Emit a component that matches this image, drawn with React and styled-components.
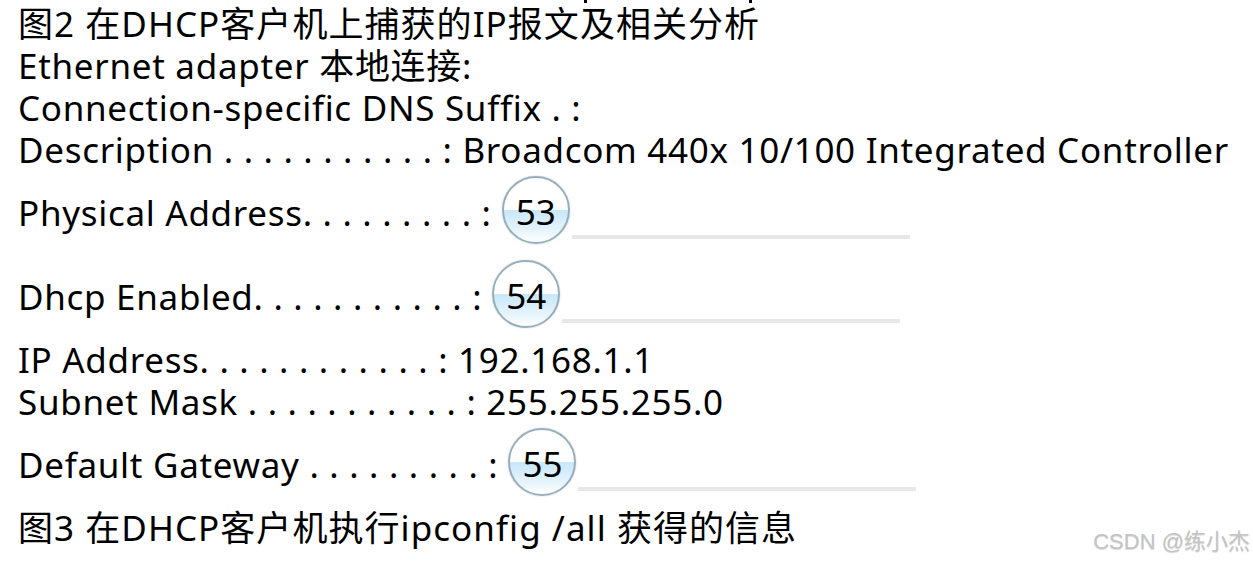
import React from "react";
import styled, { createGlobalStyle } from "styled-components";

const GlobalStyle = createGlobalStyle`
  html, body {
    margin: 0;
    padding: 0;
    background: #ffffff;
  }
`;

const rows = [
  { text: "Ethernet adapter 本地连接:" },
  { text: "Connection-specific DNS Suffix . :" },
  { text: "Description . . . . . . . . . . . : Broadcom 440x 10/100 Integrated Controller" },
  { text: "Physical Address. . . . . . . . . :", badge: "53" },
  { text: "Dhcp Enabled. . . . . . . . . . . :", badge: "54" },
  { text: "IP Address. . . . . . . . . . . . : 192.168.1.1" },
  { text: "Subnet Mask . . . . . . . . . . . : 255.255.255.0" },
  { text: "Default Gateway . . . . . . . . . :", badge: "55" },
];

const App = () => {
  return (
    <Page>
      <GlobalStyle />
      <Marks>
        <Tick />
        <Tick />
      </Marks>
      <Caption>图2 在DHCP客户机上捕获的IP报文及相关分析</Caption>
      {rows.map((row, i) =>
        row.badge ? (
          <BlankRow key={i}>
            <Line>{row.text}</Line>
            <Circle>{row.badge}</Circle>
            <Blank />
          </BlankRow>
        ) : (
          <Line key={i}>{row.text}</Line>
        )
      )}
      <Caption>图3 在DHCP客户机执行ipconfig /all 获得的信息</Caption>
      <Watermark>CSDN @练小杰</Watermark>
    </Page>
  );
};

const Page = styled.div`
  position: relative;
  width: 1253px;
  height: 563px;
  box-sizing: border-box;
  padding: 3px 0 0 18px;
  display: flex;
  flex-direction: column;
  font-family: "Noto Sans", "Noto Sans CJK SC", sans-serif;
  font-size: 35px;
  letter-spacing: 0.7px;
  color: #000;
  white-space: pre;
  overflow: hidden;
`;

const Marks = styled.div`
  position: absolute;
  top: 0;
  left: 584px;
  display: flex;
  gap: 162px;
`;

const Tick = styled.span`
  display: block;
  width: 3px;
  height: 3px;
  background: #000;
`;

const Line = styled.div`
  height: 42px;
  line-height: 42px;
`;

const Caption = styled(Line)`
  letter-spacing: 1.05px;
`;

const BlankRow = styled.div`
  display: flex;
  align-items: center;
  height: 84px;
`;

const Circle = styled.div`
  box-sizing: border-box;
  width: 68px;
  height: 68px;
  margin-left: 10px;
  margin-top: -6px;
  border: 2px solid #98aebd;
  border-radius: 50%;
  display: flex;
  align-items: center;
  justify-content: center;
  line-height: 1;
  letter-spacing: 0;
  padding-top: 2px;
  background: linear-gradient(
    to bottom,
    #ffffff 0%,
    #ffffff 50%,
    #c8e7fa 50%,
    #e4f3fc 80%,
    #ffffff 100%
  );
  box-shadow: 0 0 2px rgba(120, 150, 170, 0.4);
`;

const Blank = styled.div`
  align-self: flex-end;
  margin-bottom: 16px;
  margin-left: 2px;
  width: 338px;
  height: 4px;
  background: #e7e7e7;
`;

const Watermark = styled.div`
  position: absolute;
  right: 3px;
  bottom: 8px;
  font-family: "Liberation Sans", "Noto Sans CJK SC", sans-serif;
  font-size: 22px;
  letter-spacing: 0;
  color: #c4c4c4;
  text-shadow: 0 1px 1px rgba(0, 0, 0, 0.15);
`;

export default App;
